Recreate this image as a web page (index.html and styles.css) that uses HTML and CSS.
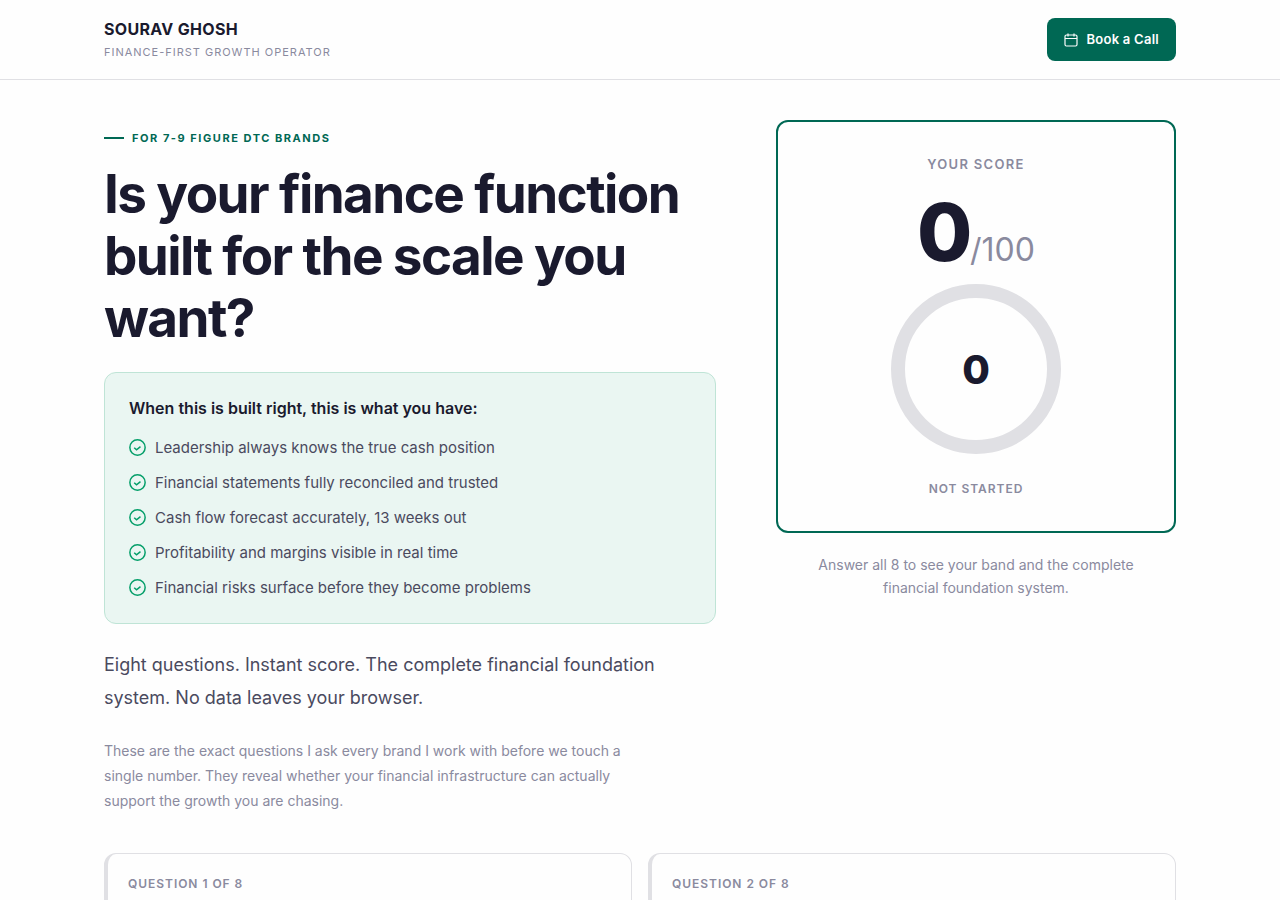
FILE: index.html
```html
<!DOCTYPE html>
<html lang="en">
<head>
<meta charset="utf-8">
<meta name="viewport" content="width=device-width, initial-scale=1">
<title>Sourav Ghosh | Finance Score</title>
<link rel="stylesheet" href="styles.css">
</head>
<body>
<svg class="sprite" aria-hidden="true">
  <symbol id="check" viewBox="0 0 16 16"><circle cx="8" cy="8" r="7.2"/><path d="M4.9 8.2 7.1 10.2 10.8 7.2"/></symbol>
</svg>
<header class="site-header">
  <div class="container header-row">
    <div>
      <div class="brand">SOURAV GHOSH</div>
      <div class="tagline">FINANCE-FIRST GROWTH OPERATOR</div>
    </div>
    <a class="call-button" href="#call">
      <svg class="calendar" viewBox="0 0 14 14" aria-hidden="true"><rect x="1" y="2" width="12" height="11" rx="1.5"/><path d="M1 5.5h12M4 .5v3M10 .5v3"/></svg>
      Book a Call
    </a>
  </div>
</header>
<main class="container">
  <section class="hero">
    <div class="intro">
      <p class="eyebrow">FOR 7-9 FIGURE DTC BRANDS</p>
      <h1 class="title">Is your finance function built for the scale you want?</h1>
      <div class="benefits">
        <h2 class="benefits-title">When this is built right, this is what you have:</h2>
        <ul class="benefit-list">
          <li><svg class="check" aria-hidden="true"><use href="#check"/></svg>Leadership always knows the true cash position</li>
          <li><svg class="check" aria-hidden="true"><use href="#check"/></svg>Financial statements fully reconciled and trusted</li>
          <li><svg class="check" aria-hidden="true"><use href="#check"/></svg>Cash flow forecast accurately, 13 weeks out</li>
          <li><svg class="check" aria-hidden="true"><use href="#check"/></svg>Profitability and margins visible in real time</li>
          <li><svg class="check" aria-hidden="true"><use href="#check"/></svg>Financial risks surface before they become problems</li>
        </ul>
      </div>
      <p class="lede">Eight questions. Instant score. The complete financial foundation system. No data leaves your browser.</p>
      <p class="note">These are the exact questions I ask every brand I work with before we touch a single number. They reveal whether your financial infrastructure can actually support the growth you are chasing.</p>
    </div>
    <aside>
      <div class="score-card">
        <div class="score-label">YOUR SCORE</div>
        <div class="score"><span class="score-value">0</span><span class="score-max">/100</span></div>
        <div class="ring">0</div>
        <div class="status">NOT STARTED</div>
      </div>
      <p class="caption">Answer all 8 to see your band and the complete financial foundation system.</p>
    </aside>
  </section>
  <section class="questions">
    <article class="question"><h3 class="question-count">QUESTION 1 OF 8</h3></article>
    <article class="question"><h3 class="question-count">QUESTION 2 OF 8</h3></article>
  </section>
</main>
</body>
</html>
```
FILE: styles.css
```css
* { box-sizing: border-box; margin: 0; padding: 0; }
body {
  font-family: Inter, "Liberation Sans", sans-serif;
  font-size: 16px;
  color: #1a1a2e;
  background: #fefefe;
  -webkit-font-smoothing: antialiased;
}
.sprite { display: none; }
.container { max-width: 1120px; margin: 0 auto; padding: 0 24px; }

.site-header { border-bottom: 1px solid #e0e0e4; padding: 18px 0; }
.header-row { display: flex; align-items: center; justify-content: space-between; }
.brand { font-size: 16px; line-height: 22px; font-weight: 700; letter-spacing: 0.02em; }
.tagline { font-size: 11px; line-height: 17px; margin-top: 4px; letter-spacing: 0.09em; color: #8a8a9e; }
.call-button {
  display: flex; align-items: center; gap: 8px;
  padding: 11px 17px;
  border-radius: 8px;
  background: #006854; color: #fefefe;
  font-size: 13px; line-height: 21px; font-weight: 600; letter-spacing: 0.02em;
  text-decoration: none;
}
.calendar { width: 14px; height: 14px; fill: none; stroke: currentColor; stroke-width: 1.2; }

.hero { display: grid; grid-template-columns: minmax(0, 1fr) 400px; gap: 60px; padding: 40px 0; }
.intro { padding-top: 9px; }
.eyebrow {
  display: flex; align-items: center; gap: 8px; margin-bottom: 16px;
  font-size: 11px; line-height: 18px; font-weight: 700; letter-spacing: 0.14em; color: #006854;
}
.eyebrow::before { content: ""; width: 20px; height: 2px; background: #006854; }
.title { max-width: 600px; font-size: 53px; line-height: 62px; font-weight: 700; letter-spacing: -0.03em; margin-bottom: 23px; }

.benefits { padding: 24px; border: 1px solid #bfe4d6; border-radius: 12px; background: #eaf6f2; }
.benefits-title { font-size: 16px; line-height: 23px; font-weight: 600; margin-bottom: 16px; }
.benefit-list { display: grid; gap: 12px; list-style: none; color: #4a4a5e; font-size: 15px; line-height: 23px; }
.benefit-list li { display: flex; align-items: center; gap: 9px; }
.check { flex: none; width: 17px; height: 17px; fill: none; stroke: #059f6a; stroke-width: 1.4; }

.lede { margin-top: 24px; font-size: 18px; line-height: 33px; color: #4a4a5e; }
.note { margin-top: 24px; max-width: 540px; font-size: 14px; line-height: 25px; color: #8a8a9e; }

.score-card {
  display: flex; flex-direction: column; align-items: center;
  padding: 32px; border: 2px solid #006854; border-radius: 12px;
}
.score-label { font-size: 13px; line-height: 21px; font-weight: 600; letter-spacing: 0.1em; color: #8a8a9e; }
.score { display: flex; align-items: baseline; margin-top: 17px; line-height: 1; }
.score-value { font-size: 80px; font-weight: 800; letter-spacing: -0.03em; }
.score-max { font-size: 32px; font-weight: 400; color: #8a8a9e; }
.ring {
  display: grid; place-items: center; width: 170px; height: 170px; margin-top: 12px;
  border: 14px solid #e0e0e4; border-radius: 50%;
  font-size: 40px; font-weight: 800;
}
.status { margin-top: 24px; font-size: 12px; line-height: 21px; font-weight: 600; letter-spacing: 0.08em; color: #8a8a9e; }
.caption { margin: 20px auto 0; max-width: 320px; text-align: center; font-size: 14px; line-height: 23px; color: #8a8a9e; }

.questions { display: grid; grid-template-columns: 1fr 1fr; gap: 16px; }
.question { padding: 20px; border: 1px solid #e0e0e4; border-left-width: 4px; border-radius: 12px; min-height: 160px; }
.question-count { font-size: 12px; line-height: 19px; font-weight: 600; letter-spacing: 0.08em; color: #8a8a9e; }
```
